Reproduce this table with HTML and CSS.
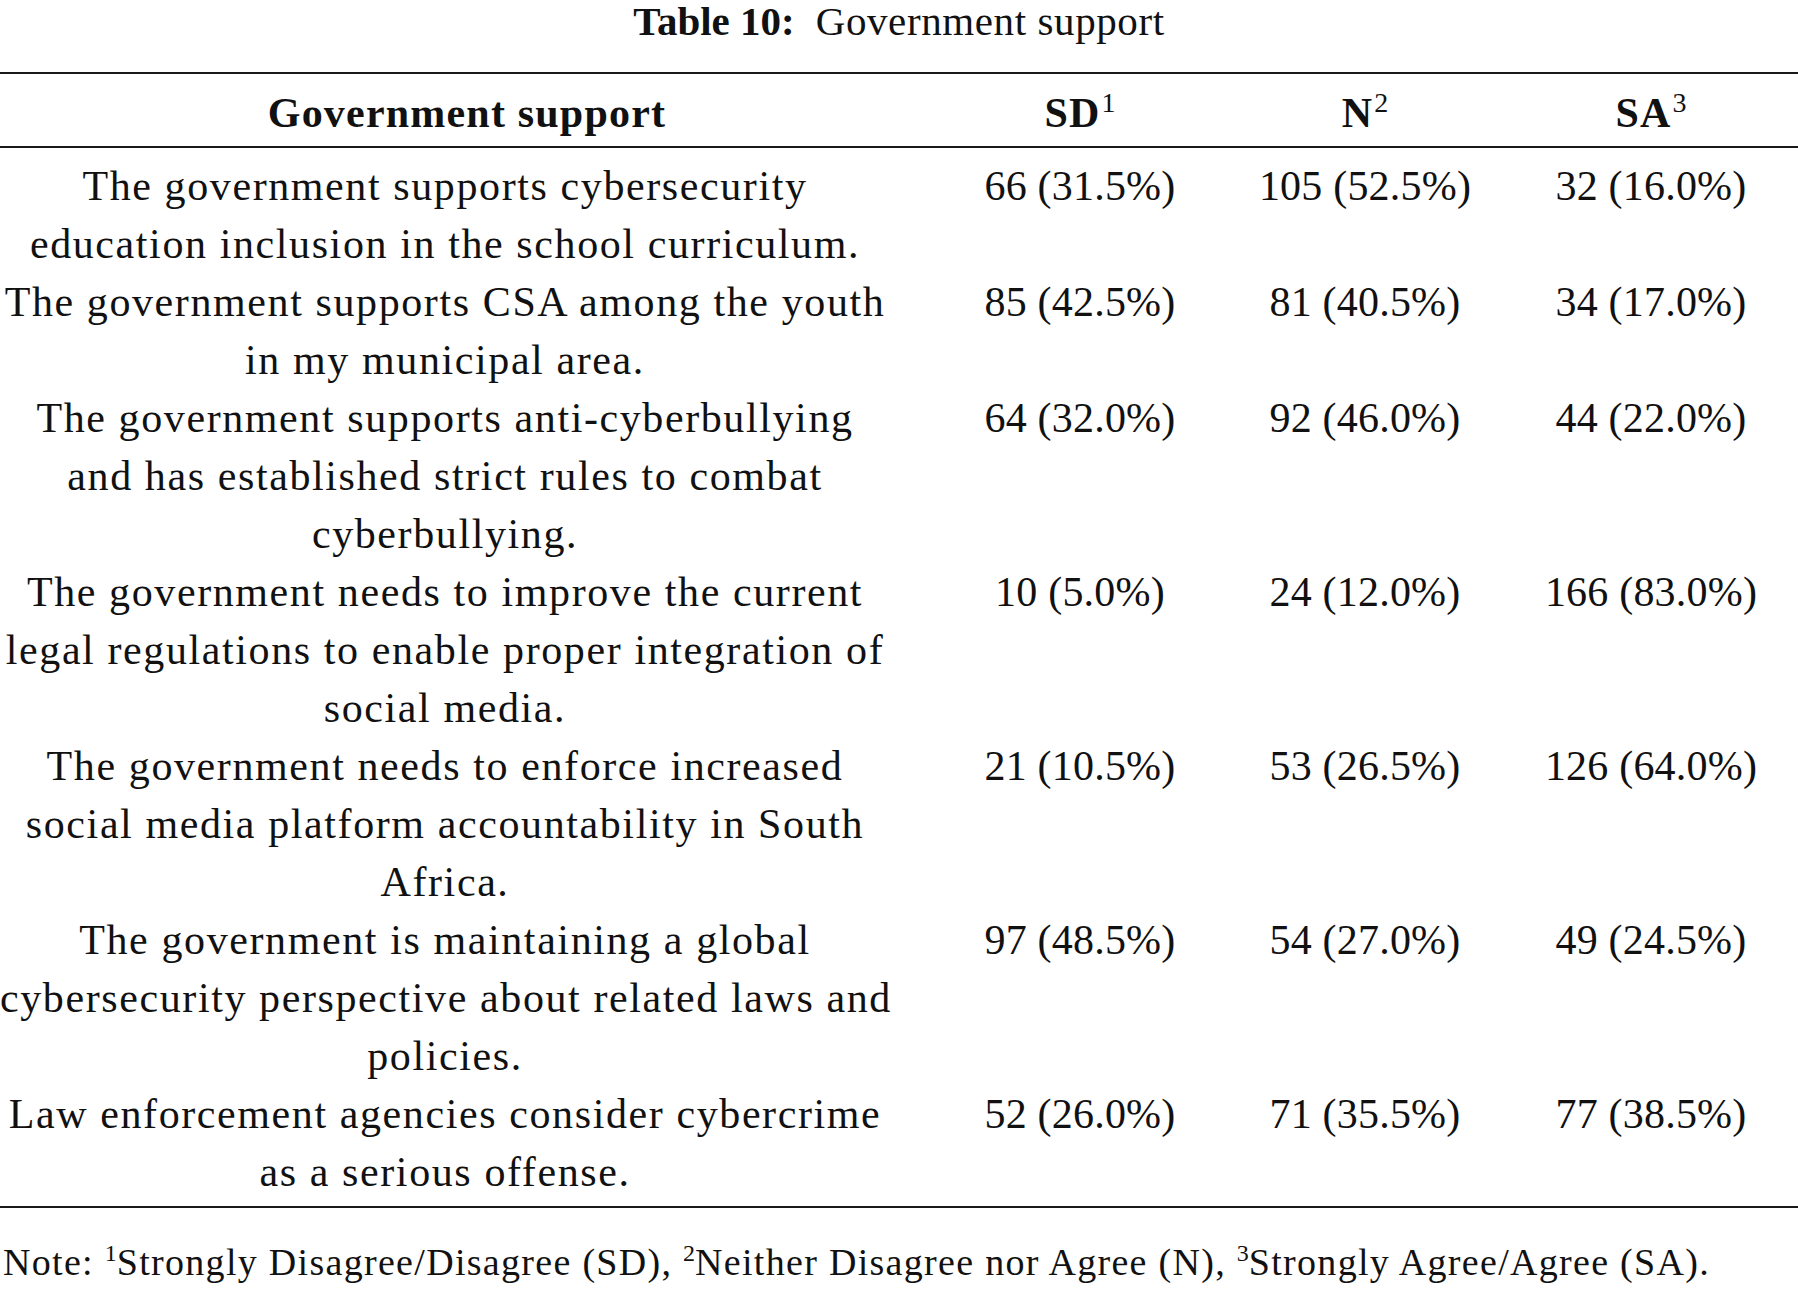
FILE: index.html
```html
<!DOCTYPE html>
<html lang="en">
<head>
<meta charset="utf-8">
<title>Table 10: Government support</title>
<link rel="stylesheet" href="styles.css">
</head>
<body>
<div class="page">
  <div class="caption"><span class="caption-label">Table 10:</span><span class="caption-text">Government support</span></div>
  <div class="table">
    <div class="row head">
      <div class="cell first">Government support</div>
      <div class="cell">SD<sup class="hsup">1</sup></div>
      <div class="cell">N<sup class="hsup">2</sup></div>
      <div class="cell">SA<sup class="hsup">3</sup></div>
    </div>
    <div class="body">
      <div class="row">
        <div class="cell first">The government supports cybersecurity<br>education inclusion in the school curriculum.</div>
        <div class="cell num">66 (31.5%)</div>
        <div class="cell num">105 (52.5%)</div>
        <div class="cell num">32 (16.0%)</div>
      </div>
      <div class="row">
        <div class="cell first">The government supports CSA among the youth<br>in my municipal area.</div>
        <div class="cell num">85 (42.5%)</div>
        <div class="cell num">81 (40.5%)</div>
        <div class="cell num">34 (17.0%)</div>
      </div>
      <div class="row">
        <div class="cell first">The government supports anti-cyberbullying<br>and has established strict rules to combat<br>cyberbullying.</div>
        <div class="cell num">64 (32.0%)</div>
        <div class="cell num">92 (46.0%)</div>
        <div class="cell num">44 (22.0%)</div>
      </div>
      <div class="row">
        <div class="cell first">The government needs to improve the current<br>legal regulations to enable proper integration of<br>social media.</div>
        <div class="cell num">10 (5.0%)</div>
        <div class="cell num">24 (12.0%)</div>
        <div class="cell num">166 (83.0%)</div>
      </div>
      <div class="row">
        <div class="cell first">The government needs to enforce increased<br>social media platform accountability in South<br>Africa.</div>
        <div class="cell num">21 (10.5%)</div>
        <div class="cell num">53 (26.5%)</div>
        <div class="cell num">126 (64.0%)</div>
      </div>
      <div class="row">
        <div class="cell first">The government is maintaining a global<br>cybersecurity perspective about related laws and<br>policies.</div>
        <div class="cell num">97 (48.5%)</div>
        <div class="cell num">54 (27.0%)</div>
        <div class="cell num">49 (24.5%)</div>
      </div>
      <div class="row">
        <div class="cell first">Law enforcement agencies consider cybercrime<br>as a serious offense.</div>
        <div class="cell num">52 (26.0%)</div>
        <div class="cell num">71 (35.5%)</div>
        <div class="cell num">77 (38.5%)</div>
      </div>
    </div>
  </div>
  <div class="note">Note: <sup class="nsup">1</sup>Strongly Disagree/Disagree (SD), <sup class="nsup">2</sup>Neither Disagree nor Agree (N), <sup class="nsup">3</sup>Strongly Agree/Agree (SA).</div>
</div>
</body>
</html>
```
FILE: styles.css
```css
html, body {
  margin: 0;
  padding: 0;
  background: #ffffff;
}

.page {
  width: 1798px;
  font-family: "Liberation Serif", "Times New Roman", serif;
  color: #111111;
}

.caption {
  text-align: center;
  font-size: 41px;
  line-height: 42px;
  height: 42px;
  margin-bottom: 30px;
}

.caption-label {
  font-weight: bold;
  margin-right: 21px;
}

.caption-text {
  letter-spacing: 0.6px;
}

.table {
  border-top: 2px solid #1a1a1a;
  border-bottom: 2px solid #1a1a1a;
}

.row {
  display: grid;
  grid-template-columns: 934px 292px 278px 294px;
}

.cell {
  text-align: center;
  white-space: nowrap;
}

.head {
  border-bottom: 2px solid #1a1a1a;
  font-weight: bold;
  font-size: 42px;
  line-height: 66px;
  padding-top: 6px;
  letter-spacing: 1.2px;
}

.hsup {
  font-weight: normal;
  font-size: 28px;
  vertical-align: 15px;
  line-height: 0;
  letter-spacing: 0;
  margin-left: 1px;
}

.body {
  padding-top: 9px;
  padding-bottom: 5px;
}

.body .row {
  font-size: 42px;
  line-height: 58px;
}

.body .first {
  padding-right: 44px;
  letter-spacing: 1.6px;
}

.num {
  letter-spacing: 0.2px;
}

.note {
  font-size: 38px;
  line-height: 44px;
  margin-top: 32px;
  padding-left: 3px;
  letter-spacing: 1.3px;
}

.nsup {
  font-size: 24px;
  vertical-align: 14px;
  line-height: 0;
  letter-spacing: 0;
}
```
